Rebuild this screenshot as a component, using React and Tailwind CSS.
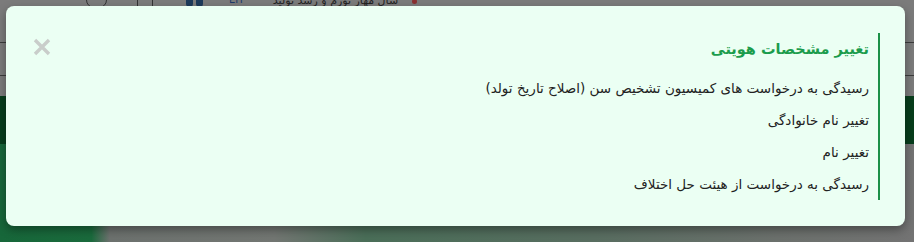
import React from "react";

export default function App() {
  const items = [
    "رسیدگی به درخواست های کمیسیون تشخیص سن (اصلاح تاریخ تولد)",
    "تغییر نام خانوادگی",
    "تغییر نام",
    "رسیدگی به درخواست از هیئت حل اختلاف",
  ];
  return (
    <div className="relative w-full h-[242px] overflow-hidden bg-[#767676]" style={{ fontFamily: '"DejaVu Sans", "Noto Sans", sans-serif' }}>
      {/* dimmed page behind */}
      <div className="flex flex-col h-full">
        <div className="h-[43px] border-b border-[#3c3c3c] bg-[#7b7b7b] flex items-start">
          <div className="ml-[86px] -mt-[8px] w-[21px] h-[16px] rounded-full border border-[#333]" />
          <div className="ml-[30px] -mt-[6px] w-[16px] h-[13px] border border-[#333]" />
          <div className="ml-[33px] -mt-[2px] flex gap-[3px]"><div className="w-[7px] h-[9px] rounded-b-full bg-[#1d3a5a]" /><div className="w-[7px] h-[9px] rounded-b-full bg-[#1d3a5a]" /></div>
          <div className="ml-[26px] -mt-[6px] text-[10px] leading-[12px] text-[#1d3a6a]">EH</div>
          <div dir="rtl" className="ml-[30px] -mt-[6px] text-[11px] leading-[14px] text-[#222] flex items-center gap-[14px]">
            <span className="w-[5px] h-[5px] rounded-full bg-[#8a3030]" />
            <span>سال مهار تورم و رشد تولید</span>
          </div>
        </div>
        <div className="h-[33px] border-b border-[#3c3c3c] bg-[#7b7b7b]" />
        <div className="h-[20px] bg-[#7b7b7b]" />
        <div className="h-[48px] bg-[#073d1c]" />
        <div className="flex-1 bg-[linear-gradient(90deg,#17673a_0%,#1a6a3c_10%,#6c716e_12%,#727672_30%,#4a6e58_40%,#586d60_65%,#6b706c_85%,#737373_100%)]" />
      </div>

      {/* modal */}
      <div className="absolute left-[6px] top-[6px] w-[899px] h-[220px] rounded-[8px] bg-[#ebfff3] shadow-[0_4px_10px_rgba(0,0,0,0.35)]">
        <div className="absolute left-[26px] top-[31px] w-[20px] h-[20px] flex items-center justify-center">
          <svg width="18" height="18" viewBox="0 0 18 18">
            <path d="M2 2 L16 16 M16 2 L2 16" stroke="#c9cdca" strokeWidth="3.4" strokeLinecap="butt" />
          </svg>
        </div>
        <div dir="rtl" className="flex pt-[27px] pr-[25px]">
          <div className="border-r-2 border-[#1b9147] pr-[9px]">
            <div className="h-[34px] flex items-center text-[14.5px] font-bold text-[#1b9c4c]">تغییر مشخصات هویتی</div>
            <div className="mt-[5px] flex flex-col">
              {items.map((t) => (
                <div key={t} className="h-[32px] leading-[32px] text-[13.5px] text-[#222]">{t}</div>
              ))}
            </div>
          </div>
        </div>
      </div>
    </div>
  );
}
